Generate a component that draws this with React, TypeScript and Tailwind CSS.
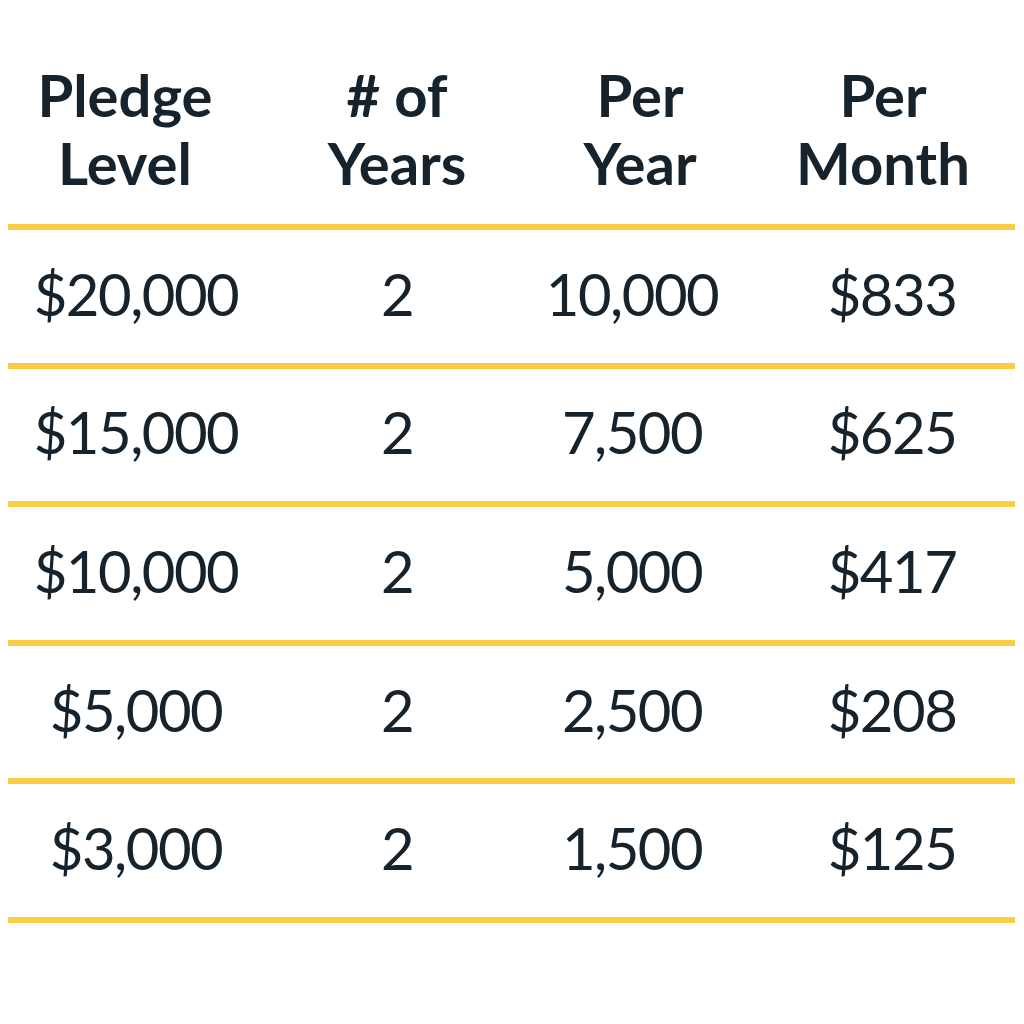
const rows = [
  ['$20,000', '2', '10,000', '$833'],
  ['$15,000', '2', '7,500', '$625'],
  ['$10,000', '2', '5,000', '$417'],
  ['$5,000', '2', '2,500', '$208'],
  ['$3,000', '2', '1,500', '$125'],
]

// per-column nudges so the data sits where the reference has it
const cellPad = ['', '', '', 'pl-[18px]']
const headPad = ['pr-[22px]', '', 'pl-[16px]', '']

function Rule() {
  return <div className="ml-[8px] mr-[9px] h-[6px] bg-[#fbcd45]" />
}

export default function App() {
  return (
    <div
      className="w-[1024px] h-[1024px] bg-white text-[#16232c]"
      style={{ fontFamily: 'Lato, "Open Sans", sans-serif' }}
    >
      {/* Header */}
      <div className="grid grid-cols-[272px_250px_220px_282px] h-[224px] pt-[61px]">
        {[['Pledge', 'Level'], ['# of', 'Years'], ['Per', 'Year'], ['Per', 'Month']].map((h, i) => (
          <div
            key={i}
            className={`flex flex-col items-center text-[58px] font-bold leading-[68px] ${headPad[i]}`}
          >
            <span>{h[0]}</span>
            <span>{h[1]}</span>
          </div>
        ))}
      </div>

      {rows.map((r, i) => (
        <div key={i}>
          <Rule />
          <div className="grid grid-cols-[272px_250px_220px_282px] h-[132.6px] pb-[5px]">
            {r.map((c, j) => (
              <div
                key={j}
                className={`flex items-center justify-center text-[58px] leading-none tracking-[-1.5px] ${cellPad[j]}`}
              >
                {c}
              </div>
            ))}
          </div>
        </div>
      ))}
      <Rule />
    </div>
  )
}
